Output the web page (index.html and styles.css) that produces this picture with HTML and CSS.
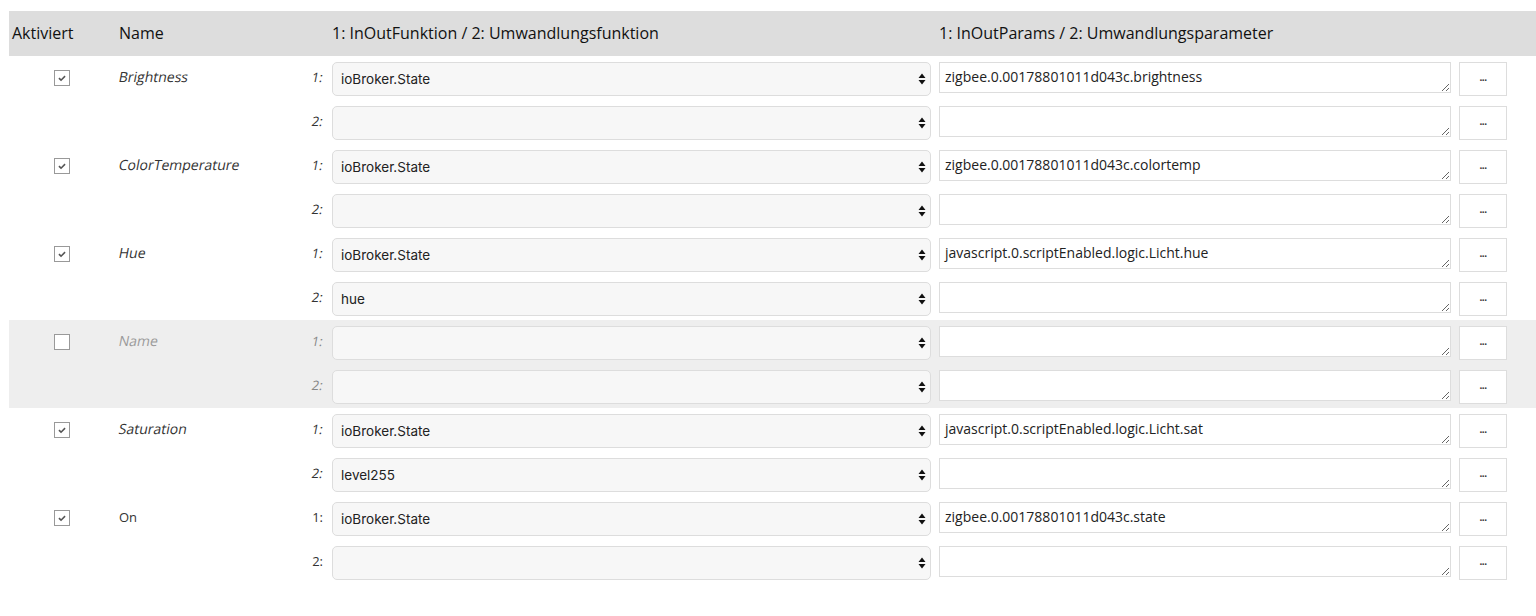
FILE: index.html
```html
<!DOCTYPE html>
<html lang="de">
<head>
<meta charset="utf-8">
<title>Zustände</title>
<link rel="stylesheet" href="styles.css">
</head>
<body>
<div class="page">
  <div class="thead">
    <div class="th th-active">Aktiviert</div>
    <div class="th th-name">Name</div>
    <div class="th th-func">1: InOutFunktion / 2: Umwandlungsfunktion</div>
    <div class="th th-params">1: InOutParams / 2: Umwandlungsparameter</div>
  </div>

  <div class="group">
    <div class="cell-check"><span class="cb checked"><svg viewBox="0 0 16 16" width="16" height="16"><path d="M4.5 8.2l2.4 2.3 4.6-4.6" fill="none" stroke="#555" stroke-width="1.8"/></svg></span></div>
    <div class="cell-name"><span class="obl">Brightness</span></div>
    <div class="sub">
      <div class="lbl"><span class="obl">1:</span></div>
      <div class="cell-func"><div class="sel"><span>ioBroker.State</span><svg class="arr" viewBox="0 0 8 12" width="8" height="12"><path d="M4 0.5L7.5 5H0.5z M4 11.5L7.5 7H0.5z" fill="#111"/></svg></div></div>
      <div class="cell-param"><textarea class="ta">zigbee.0.00178801011d043c.brightness</textarea></div>
      <div class="cell-btn"><button class="btn">...</button></div>
    </div>
    <div class="sub">
      <div class="lbl"><span class="obl">2:</span></div>
      <div class="cell-func"><div class="sel"><span></span><svg class="arr" viewBox="0 0 8 12" width="8" height="12"><path d="M4 0.5L7.5 5H0.5z M4 11.5L7.5 7H0.5z" fill="#111"/></svg></div></div>
      <div class="cell-param"><textarea class="ta"></textarea></div>
      <div class="cell-btn"><button class="btn">...</button></div>
    </div>
  </div>

  <div class="group">
    <div class="cell-check"><span class="cb checked"><svg viewBox="0 0 16 16" width="16" height="16"><path d="M4.5 8.2l2.4 2.3 4.6-4.6" fill="none" stroke="#555" stroke-width="1.8"/></svg></span></div>
    <div class="cell-name"><span class="obl">ColorTemperature</span></div>
    <div class="sub">
      <div class="lbl"><span class="obl">1:</span></div>
      <div class="cell-func"><div class="sel"><span>ioBroker.State</span><svg class="arr" viewBox="0 0 8 12" width="8" height="12"><path d="M4 0.5L7.5 5H0.5z M4 11.5L7.5 7H0.5z" fill="#111"/></svg></div></div>
      <div class="cell-param"><textarea class="ta">zigbee.0.00178801011d043c.colortemp</textarea></div>
      <div class="cell-btn"><button class="btn">...</button></div>
    </div>
    <div class="sub">
      <div class="lbl"><span class="obl">2:</span></div>
      <div class="cell-func"><div class="sel"><span></span><svg class="arr" viewBox="0 0 8 12" width="8" height="12"><path d="M4 0.5L7.5 5H0.5z M4 11.5L7.5 7H0.5z" fill="#111"/></svg></div></div>
      <div class="cell-param"><textarea class="ta"></textarea></div>
      <div class="cell-btn"><button class="btn">...</button></div>
    </div>
  </div>

  <div class="group">
    <div class="cell-check"><span class="cb checked"><svg viewBox="0 0 16 16" width="16" height="16"><path d="M4.5 8.2l2.4 2.3 4.6-4.6" fill="none" stroke="#555" stroke-width="1.8"/></svg></span></div>
    <div class="cell-name"><span class="obl">Hue</span></div>
    <div class="sub">
      <div class="lbl"><span class="obl">1:</span></div>
      <div class="cell-func"><div class="sel"><span>ioBroker.State</span><svg class="arr" viewBox="0 0 8 12" width="8" height="12"><path d="M4 0.5L7.5 5H0.5z M4 11.5L7.5 7H0.5z" fill="#111"/></svg></div></div>
      <div class="cell-param"><textarea class="ta">javascript.0.scriptEnabled.logic.Licht.hue</textarea></div>
      <div class="cell-btn"><button class="btn">...</button></div>
    </div>
    <div class="sub">
      <div class="lbl"><span class="obl">2:</span></div>
      <div class="cell-func"><div class="sel"><span>hue</span><svg class="arr" viewBox="0 0 8 12" width="8" height="12"><path d="M4 0.5L7.5 5H0.5z M4 11.5L7.5 7H0.5z" fill="#111"/></svg></div></div>
      <div class="cell-param"><textarea class="ta"></textarea></div>
      <div class="cell-btn"><button class="btn">...</button></div>
    </div>
  </div>

  <div class="group disabled">
    <div class="cell-check"><span class="cb"></span></div>
    <div class="cell-name placeholder"><span class="obl">Name</span></div>
    <div class="sub">
      <div class="lbl"><span class="obl">1:</span></div>
      <div class="cell-func"><div class="sel"><span></span><svg class="arr" viewBox="0 0 8 12" width="8" height="12"><path d="M4 0.5L7.5 5H0.5z M4 11.5L7.5 7H0.5z" fill="#111"/></svg></div></div>
      <div class="cell-param"><textarea class="ta"></textarea></div>
      <div class="cell-btn"><button class="btn">...</button></div>
    </div>
    <div class="sub">
      <div class="lbl"><span class="obl">2:</span></div>
      <div class="cell-func"><div class="sel"><span></span><svg class="arr" viewBox="0 0 8 12" width="8" height="12"><path d="M4 0.5L7.5 5H0.5z M4 11.5L7.5 7H0.5z" fill="#111"/></svg></div></div>
      <div class="cell-param"><textarea class="ta"></textarea></div>
      <div class="cell-btn"><button class="btn">...</button></div>
    </div>
  </div>

  <div class="group">
    <div class="cell-check"><span class="cb checked"><svg viewBox="0 0 16 16" width="16" height="16"><path d="M4.5 8.2l2.4 2.3 4.6-4.6" fill="none" stroke="#555" stroke-width="1.8"/></svg></span></div>
    <div class="cell-name"><span class="obl">Saturation</span></div>
    <div class="sub">
      <div class="lbl"><span class="obl">1:</span></div>
      <div class="cell-func"><div class="sel"><span>ioBroker.State</span><svg class="arr" viewBox="0 0 8 12" width="8" height="12"><path d="M4 0.5L7.5 5H0.5z M4 11.5L7.5 7H0.5z" fill="#111"/></svg></div></div>
      <div class="cell-param"><textarea class="ta">javascript.0.scriptEnabled.logic.Licht.sat</textarea></div>
      <div class="cell-btn"><button class="btn">...</button></div>
    </div>
    <div class="sub">
      <div class="lbl"><span class="obl">2:</span></div>
      <div class="cell-func"><div class="sel"><span>level255</span><svg class="arr" viewBox="0 0 8 12" width="8" height="12"><path d="M4 0.5L7.5 5H0.5z M4 11.5L7.5 7H0.5z" fill="#111"/></svg></div></div>
      <div class="cell-param"><textarea class="ta"></textarea></div>
      <div class="cell-btn"><button class="btn">...</button></div>
    </div>
  </div>

  <div class="group">
    <div class="cell-check"><span class="cb checked"><svg viewBox="0 0 16 16" width="16" height="16"><path d="M4.5 8.2l2.4 2.3 4.6-4.6" fill="none" stroke="#555" stroke-width="1.8"/></svg></span></div>
    <div class="cell-name">On</div>
    <div class="sub">
      <div class="lbl">1:</div>
      <div class="cell-func"><div class="sel"><span>ioBroker.State</span><svg class="arr" viewBox="0 0 8 12" width="8" height="12"><path d="M4 0.5L7.5 5H0.5z M4 11.5L7.5 7H0.5z" fill="#111"/></svg></div></div>
      <div class="cell-param"><textarea class="ta">zigbee.0.00178801011d043c.state</textarea></div>
      <div class="cell-btn"><button class="btn">...</button></div>
    </div>
    <div class="sub">
      <div class="lbl">2:</div>
      <div class="cell-func"><div class="sel"><span></span><svg class="arr" viewBox="0 0 8 12" width="8" height="12"><path d="M4 0.5L7.5 5H0.5z M4 11.5L7.5 7H0.5z" fill="#111"/></svg></div></div>
      <div class="cell-param"><textarea class="ta"></textarea></div>
      <div class="cell-btn"><button class="btn">...</button></div>
    </div>
  </div>
</div>
</body>
</html>
```

FILE: styles.css
```css
html, body {
  margin: 0;
  padding: 0;
  background: #ffffff;
}

body {
  font-family: "Open Sans", "Liberation Sans", sans-serif;
  color: #333333;
  font-size: 13px;
}

.page {
  padding: 11px 0 0 9px;
}

.thead {
  display: grid;
  grid-template-columns: 106px 213px 607px 1fr;
  height: 45px;
  box-sizing: border-box;
  padding-bottom: 2px;
  align-items: center;
  background: #dddddd;
  color: #111111;
  font-size: 16px;
}

.th {
  padding-left: 4px;
  white-space: nowrap;
}

.th-active {
  padding-left: 3px;
}

.group {
  display: grid;
  grid-template-columns: 106px 190px 1fr;
  grid-template-rows: 44px 44px;
}

.group.disabled {
  background: #eeeeee;
}

.cell-check {
  grid-column: 1;
  grid-row: 1;
  display: flex;
  justify-content: center;
  padding-top: 14px;
}

.cb {
  box-sizing: border-box;
  width: 16px;
  height: 16px;
  border: 1px solid #999999;
  background: #ffffff;
  display: flex;
  align-items: center;
  justify-content: center;
}

.cb svg {
  display: block;
}

.cell-name {
  grid-column: 2;
  grid-row: 1;
  padding: 12px 0 0 4px;
  line-height: 18px;
}

.cell-name .obl {
  font-size: 14px;
}

.obl {
  display: inline-block;
  transform: skewX(-11deg);
}

.placeholder {
  color: #9a9a9a;
}

.sub {
  grid-column: 3;
  display: grid;
  grid-template-columns: 23px 607px 520px 56px 1fr;
  align-items: start;
}

.sub:first-of-type {
  grid-row: 1;
}

.group .sub + .sub {
  grid-row: 2;
}

.lbl {
  text-align: right;
  padding: 12px 5px 0 0;
  line-height: 18px;
}

.group.disabled .lbl {
  color: #888888;
}

.cell-func,
.cell-param,
.cell-btn {
  padding: 6px 4px 0 4px;
}

.sel {
  box-sizing: border-box;
  height: 34px;
  border: 1px solid #dddddd;
  border-radius: 5px;
  background: #f7f7f7;
  display: flex;
  align-items: center;
  justify-content: space-between;
  padding: 0 4px 0 8px;
  color: #222222;
  font-family: "Inter", "Open Sans", sans-serif;
  font-size: 13.5px;
}

.arr {
  display: block;
}

.ta {
  box-sizing: border-box;
  display: block;
  width: 100%;
  height: 31px;
  margin: 0;
  border: 1px solid #dddddd;
  border-radius: 0;
  background: #ffffff;
  padding: 4px 5px;
  font-family: "Open Sans", "Liberation Sans", sans-serif;
  font-size: 14px;
  line-height: 19px;
  color: #222222;
  overflow: hidden;
}

.btn {
  box-sizing: border-box;
  display: block;
  width: 48px;
  height: 34px;
  margin: 0;
  border: 1px solid #dddddd;
  background: #ffffff;
  font-family: "Open Sans", "Liberation Sans", sans-serif;
  font-size: 10px;
  font-weight: bold;
  color: #333333;
  padding: 0 0 4px 0;
  letter-spacing: -0.5px;
}
```
